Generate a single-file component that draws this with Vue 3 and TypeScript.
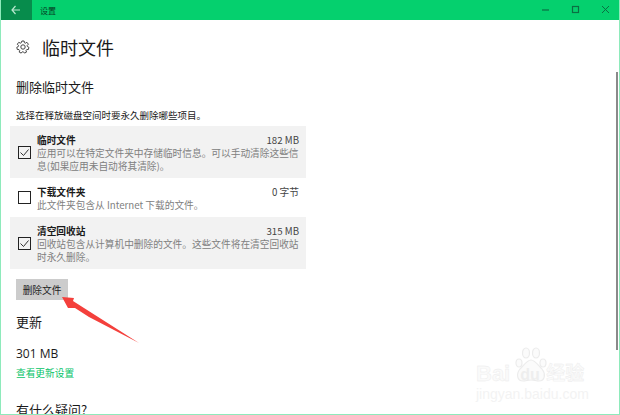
<template>
  <div class="window">
    <header class="titlebar">
      <button class="back" aria-label="返回">
        <svg width="10" height="10" viewBox="0 0 10 10" fill="none" stroke="#b9e8cf" stroke-width="1.2">
          <path d="M4.500 1 1 5l3.500 4M1 5h8" />
        </svg>
      </button>
      <span class="app-title">设置</span>
      <div class="controls">
        <svg width="10" height="10" viewBox="0 0 10 10" fill="none" stroke="#0b6f43" stroke-width="1.200">
          <path d="M1 5h7" />
        </svg>
        <svg width="10" height="10" viewBox="0 0 10 10" fill="none" stroke="#0b6f43" stroke-width="1.200">
          <rect x="1.500" y="1.500" width="6" height="6" />
        </svg>
        <svg width="10" height="10" viewBox="0 0 10 10" fill="none" stroke="#0b6f43" stroke-width="1">
          <path d="M1 1l7 7M8 1 1 8" />
        </svg>
      </div>
    </header>

    <main class="content">
      <div class="page-head">
        <svg class="gear" width="14" height="14" viewBox="0 0 14 14" fill="none" stroke="#444" stroke-width="1">
          <circle cx="7" cy="7" r="2.200" />
          <path
            d="M5.900 1h2.200l.3 1.700 1 .5 1.500-.9 1.500 1.900-1.200 1.200.2 1.100 1.500.8-.5 2.200-1.700.1-.7.9.5 1.600-2 1-1.100-1.300H6.300l-1.100 1.300-2-1 .5-1.600-.7-.9L1.300 9.500.8 7.300l1.500-.8.2-1.100L1.300 4.200l1.500-1.900 1.500.9 1-.5z"
          />
        </svg>
        <h1>临时文件</h1>
      </div>

      <h2>删除临时文件</h2>
      <p class="desc">选择在释放磁盘空间时要永久删除哪些项目。</p>

      <ul class="list">
        <li v-for="item in items" :key="item.name" class="row" :class="{ on: item.checked }">
          <span class="box">
            <svg v-if="item.checked" width="11" height="11" viewBox="0 0 11 11" fill="none" stroke="#333" stroke-width="1">
              <path d="M1.500 5.500 4.500 8.500l5-6" />
            </svg>
          </span>
          <div class="body">
            <div class="line">
              <strong>{{ item.name }}</strong>
              <span class="size">{{ item.size }}</span>
            </div>
            <p>{{ item.text }}</p>
          </div>
        </li>
      </ul>

      <button class="delete">删除文件</button>

      <h2 class="update">更新</h2>
      <div class="amount">301 MB</div>
      <a class="link">查看更新设置</a>
      <h2 class="question">有什么疑问?</h2>
    </main>

    <div class="scrollbar"></div>

    <svg class="arrow" width="80" height="50" viewBox="0 0 80 50">
      <path d="M1 1 13 2 12 5 78 47 28 21 14 12 7 12z" fill="#f4403c" />
    </svg>

    <div class="watermark">
      <div class="wm-main">
        <span>Bai</span>
        <span class="wm-paw">
          <svg width="36" height="36" viewBox="0 0 36 36" fill="#fbfbfb" stroke="#ececec" stroke-width="1.200">
            <ellipse cx="6" cy="16" rx="3" ry="4" />
            <ellipse cx="13" cy="6" rx="3.500" ry="5" />
            <ellipse cx="23" cy="6" rx="3.500" ry="5" />
            <ellipse cx="30" cy="16" rx="3" ry="4" />
            <path d="M18 13c-4 0-7 5-11 9-4 5-3 12 3 12 3 0 5-1 8-1s5 1 8 1c6 0 7-7 3-12-4-4-7-9-11-9z" />
          </svg>
          <span class="wm-du">du</span>
        </span>
        <span class="wm-cn">经验</span>
      </div>
      <div class="wm-sub">jingyan.baidu.com</div>
    </div>
  </div>
</template>

<script setup lang="ts">
interface CleanItem {
  name: string;
  size: string;
  text: string;
  checked: boolean;
}

const items: CleanItem[] = [
  {
    name: '临时文件',
    size: '182 MB',
    text: '应用可以在特定文件夹中存储临时信息。可以手动清除这些信息(如果应用未自动将其清除)。',
    checked: true
  },
  {
    name: '下载文件夹',
    size: '0 字节',
    text: '此文件夹包含从 Internet 下载的文件。',
    checked: false
  },
  {
    name: '清空回收站',
    size: '315 MB',
    text: '回收站包含从计算机中删除的文件。这些文件将在清空回收站时永久删除。',
    checked: true
  }
];
</script>

<style>
html,
body {
  margin: 0;
  overflow: hidden;
}
</style>

<style scoped>
.window {
  position: relative;
  width: 620px;
  height: 415px;
  box-sizing: border-box;
  overflow: hidden;
  background: #fff;
  border-left: 1px solid #8eeabb;
  border-right: 1px solid #8eeabb;
  border-bottom: 1px solid #8eeabb;
  color: #1a1a1a;
  font-family: "Noto Sans CJK SC", "Liberation Sans", sans-serif;
}

.titlebar {
  display: flex;
  align-items: center;
  height: 20px;
  margin: 0 -1px;
  background: #05d06e;
}

.back {
  display: flex;
  align-items: center;
  justify-content: center;
  width: 32px;
  height: 20px;
  padding: 0;
  border: 0;
  background: #078c4c;
}

.app-title {
  margin-left: 8px;
  font-size: 8px;
  color: #063d24;
}

.controls {
  display: flex;
  gap: 20px;
  margin-left: auto;
  margin-right: 9px;
}

.content {
  display: flex;
  flex-direction: column;
  align-items: flex-start;
  padding: 0 0 0 15px;
}

.page-head {
  display: flex;
  align-items: center;
  height: 26px;
  margin-top: 14px;
}

.gear {
  margin-right: 13px;
}

h1 {
  margin: 0 0 0 -1px;
  font-size: 18px;
  font-weight: 400;
  line-height: 26px;
}

h2 {
  margin: 0;
  font-size: 13px;
  font-weight: 400;
  line-height: 20px;
}

.page-head + h2 {
  margin-top: 17px;
}

.desc {
  margin: 10px 0 0;
  font-size: 9.500px;
  line-height: 16px;
}

.list {
  width: 296px;
  margin: 3px 0 0 -6px;
  padding: 0;
  list-style: none;
}

.row {
  display: flex;
  align-items: center;
  box-sizing: border-box;
  padding: 0 7px;
  height: 39px;
}

.row.on {
  height: 52px;
  background: #f2f2f2;
}

.box {
  flex: none;
  box-sizing: border-box;
  display: flex;
  align-items: center;
  justify-content: center;
  width: 13px;
  height: 13px;
  margin: 0 6px 0 1px;
  border: 1.500px solid #222;
  background: #fff;
}

.row.on .box {
  background: transparent;
}

.body {
  flex: 1;
  min-width: 0;
  padding-top: 2px;
}

.line {
  display: flex;
  justify-content: space-between;
  font-size: 9.700px;
  line-height: 13px;
}

.line strong {
  font-weight: 700;
}

.size {
  color: #444;
}

.body p {
  margin: 0;
  font-size: 9.700px;
  line-height: 13px;
  color: #808080;
}

.delete {
  width: 52px;
  height: 21px;
  margin: 10px 0 0;
  padding: 0;
  border: 0;
  background: #cccccc;
  color: #222;
  font-family: inherit;
  font-size: 9.700px;
}

.update {
  margin-top: 12px;
}

.amount {
  margin-top: 12px;
  font-size: 12px;
  line-height: 20px;
  font-family: "Open Sans", "Noto Sans CJK SC", sans-serif;
}

.link {
  margin-top: 2px;
  font-size: 9.700px;
  line-height: 14px;
  color: #05c468;
}

.question {
  margin-top: 20px;
}

.scrollbar {
  position: absolute;
  right: 1px;
  top: 72px;
  width: 2px;
  height: 278px;
  background: #8a8a8a;
}

.arrow {
  position: absolute;
  left: 60px;
  top: 296px;
}

.watermark {
  position: absolute;
  left: 475px;
  top: 347px;
  width: 113px;
}

.wm-main {
  display: flex;
  align-items: flex-end;
  height: 38px;
  font-size: 22px;
  line-height: 22px;
  font-weight: 700;
  color: #fafafa;
  -webkit-text-stroke: 0.400px #ebebeb;
  font-family: "Liberation Sans", "Noto Sans CJK SC", sans-serif;
  white-space: nowrap;
}

.wm-paw {
  position: relative;
  width: 36px;
  height: 38px;
  margin: 0 -3px 0 3px;
}

.wm-paw svg {
  display: block;
}

.wm-du {
  position: absolute;
  left: 7px;
  top: 20px;
  font-size: 16px;
  line-height: 16px;
  -webkit-text-stroke: 0;
  color: #eeeeee;
}

.wm-cn {
  font-size: 19px;
}

.wm-sub {
  margin-top: 2px;
  font-size: 14px;
  line-height: 14px;
  color: #f3f3f3;
  font-family: "Liberation Sans", sans-serif;
  white-space: nowrap;
}
</style>
